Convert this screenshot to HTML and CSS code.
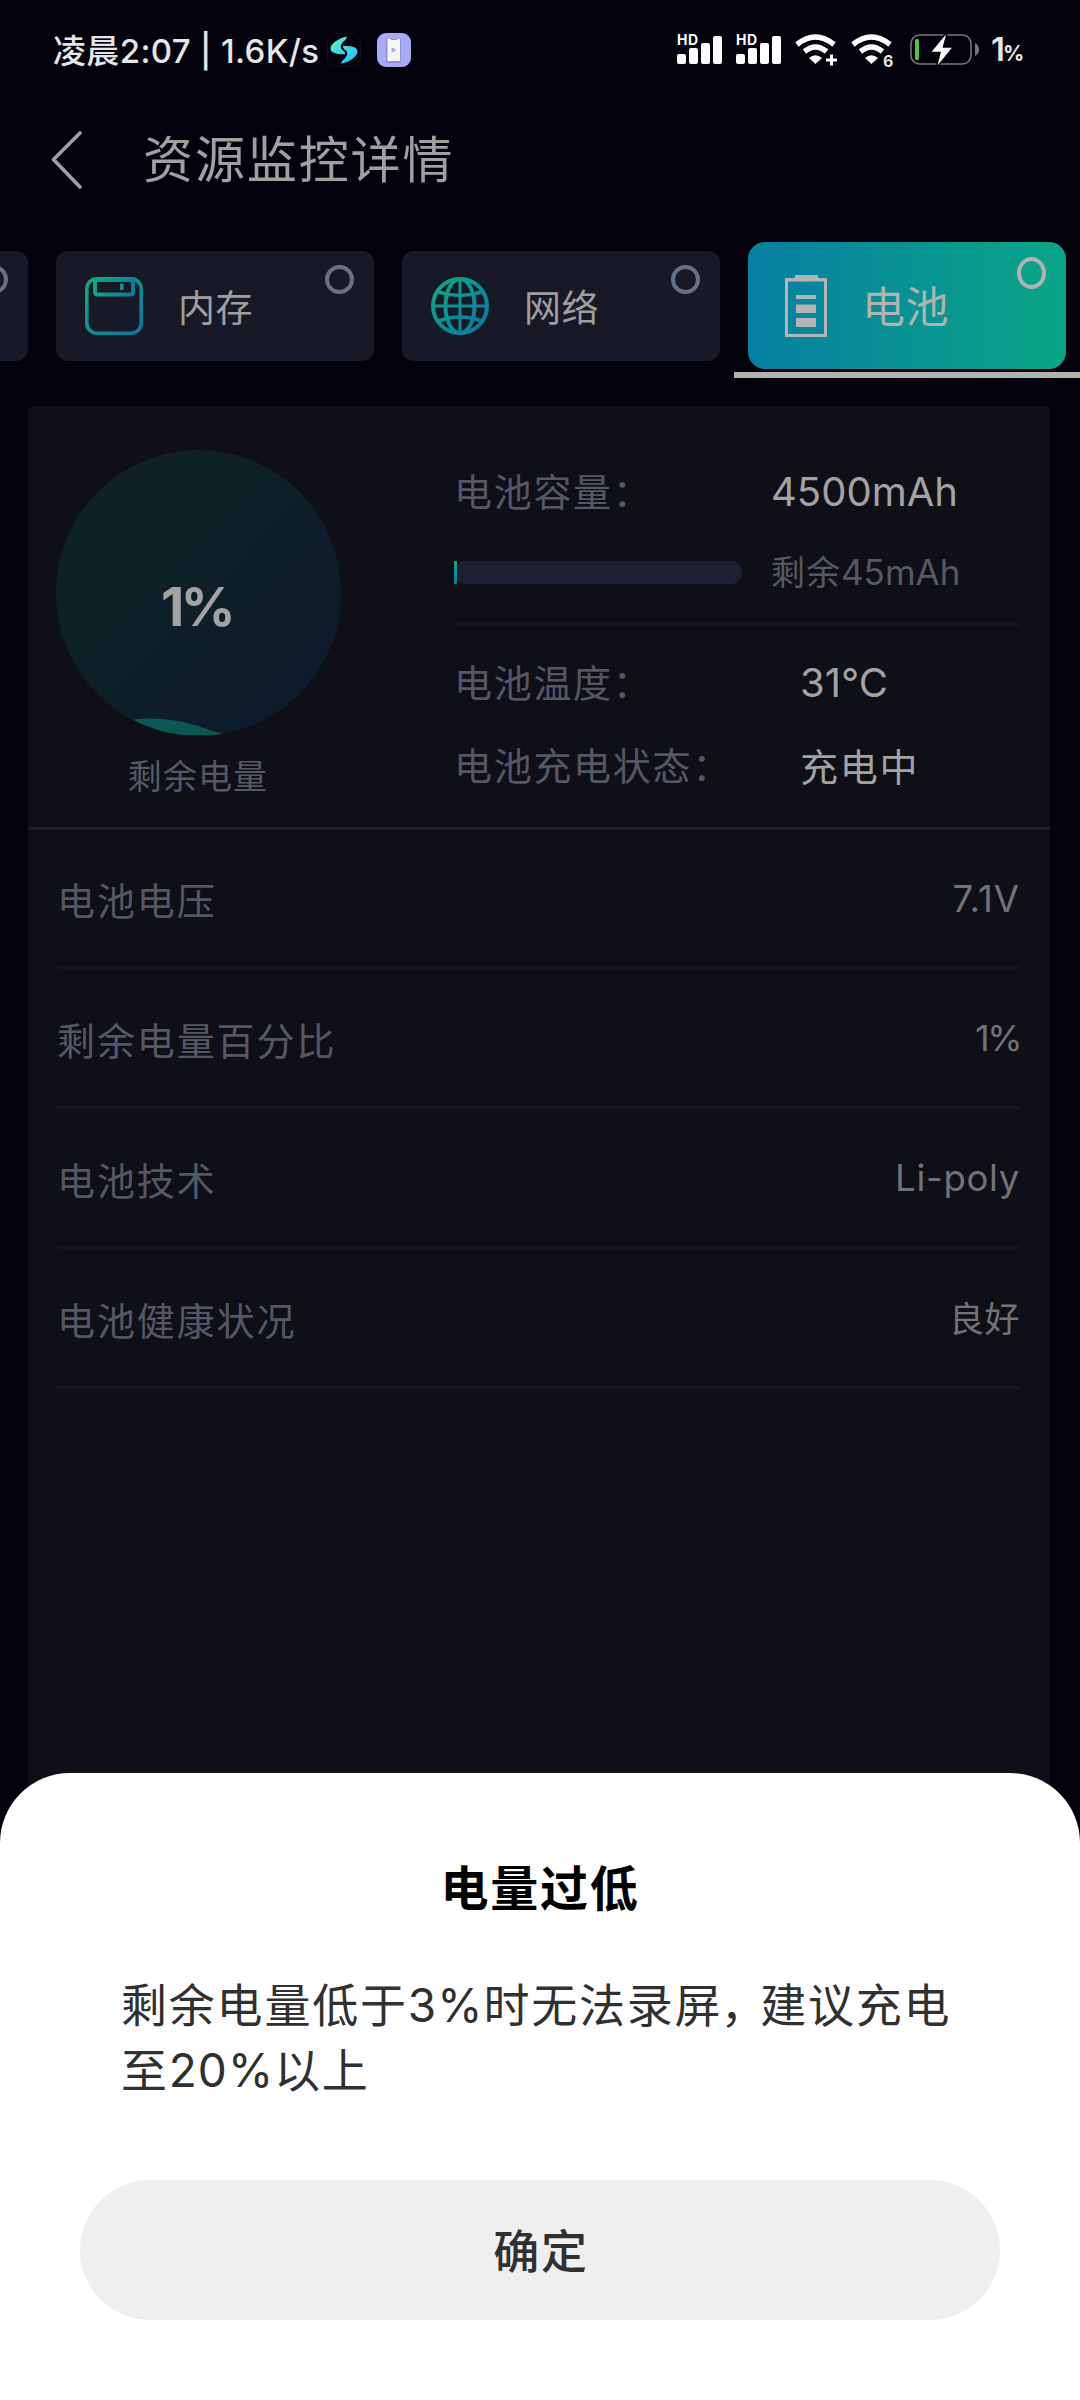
FILE: index.html
```html
<!DOCTYPE html>
<html lang="zh-CN">
<head>
<meta charset="utf-8">
<title>资源监控详情</title>
<link rel="stylesheet" href="styles.css">
</head>
<body>
<svg class="defs" width="0" height="0" aria-hidden="true">
  <defs>
    <linearGradient id="teal" gradientUnits="userSpaceOnUse" x1="0" y1="0" x2="58" y2="58">
      <stop offset="0.1" stop-color="#0fa585"/><stop offset="0.9" stop-color="#0a7ba3"/>
    </linearGradient>
    <linearGradient id="tealSmall" gradientUnits="userSpaceOnUse" x1="8" y1="4" x2="50" y2="20">
      <stop offset="0.1" stop-color="#0fa585"/><stop offset="0.9" stop-color="#0a7ba3"/>
    </linearGradient>
    <linearGradient id="swirl" gradientUnits="userSpaceOnUse" x1="8" y1="4" x2="24" y2="30">
      <stop offset="0" stop-color="#62e8cb"/><stop offset="1" stop-color="#1fc6f2"/>
    </linearGradient>
  </defs>
</svg>
<div class="screen">
  <div class="statusbar">
    <span class="clock">凌晨2:07 | 1.6K/s</span>
    <svg class="app-swirl" width="34" height="34" viewBox="0 0 34 34">
      <rect x="0.5" y="0.5" width="33" height="33" rx="8" fill="none" stroke="#12121e"/>
      <path fill="url(#swirl)" d="M20 3.500C12 5 3.500 10.500 3.500 15.500C3.500 20.500 11 21.500 17.500 21.200C19 20 17 18 15.500 17C13 15 13.500 12 15.500 9.500C17 7.500 19.500 6.500 20 3.500Z"/>
      <path fill="url(#swirl)" d="M14 30.800C22 29.500 30.500 23.500 30.500 18.500C30.500 13.500 23 12.800 16.500 13C15 14 17 16 18.500 17.200C21 19 20.500 22 18.500 24.500C17 26.500 14.500 27.800 14 30.800Z"/>
    </svg>
    <svg class="app-phone" width="34" height="34" viewBox="0 0 34 34">
      <rect width="34" height="34" rx="9" fill="#a8abf3"/>
      <rect x="9" y="6" width="15" height="24" rx="1.5" fill="#8e91de"/>
      <path fill="#f6f5f7" d="M10.500 6h3.500v1h6v-1h3v22h-12.500z"/>
      <path fill="#a8abf3" d="M14.500 14l5 3l-5 3z"/>
    </svg>
    <div class="indicators">
      <div class="signal"><span class="hd">HD</span>
        <svg width="46" height="30" viewBox="0 0 46 30" fill="#fff"><rect x="0" y="19" width="9" height="10" rx="2"/><rect x="12" y="13" width="9" height="16" rx="2"/><rect x="24" y="8" width="9" height="21" rx="2"/><rect x="36" y="1" width="9" height="28" rx="2"/></svg>
      </div>
      <div class="signal"><span class="hd">HD</span>
        <svg width="46" height="30" viewBox="0 0 46 30" fill="#fff"><rect x="0" y="19" width="9" height="10" rx="2"/><rect x="12" y="13" width="9" height="16" rx="2"/><rect x="24" y="8" width="9" height="21" rx="2"/><rect x="36" y="1" width="9" height="28" rx="2"/></svg>
      </div>
      <svg class="wifi" width="43" height="34" viewBox="0 0 43 34" fill="none" stroke="#fff">
        <path stroke-width="5.500" d="M2 10.500Q20.500 -4.500 39 10.500"/>
        <path stroke-width="5.500" d="M9.500 17.500Q20.500 8.500 31.500 17.500"/>
        <path fill="#fff" stroke="none" d="M14 24Q20.500 18.500 27 24L20.500 30z"/>
        <path stroke-width="3" d="M31 26h11M36.500 20.500v11"/>
      </svg>
      <div class="wifi-six"><svg width="43" height="34" viewBox="0 0 43 34" fill="none" stroke="#fff">
        <path stroke-width="5.500" d="M2 10.500Q20.500 -4.500 39 10.500"/>
        <path stroke-width="5.500" d="M9.500 17.500Q20.500 8.500 31.500 17.500"/>
        <path fill="#fff" stroke="none" d="M14 24Q20.500 18.500 27 24L20.500 30z"/>
      </svg><span class="six">6</span></div>
      <svg class="charge" width="69" height="38" viewBox="0 0 69 38">
        <rect x="1" y="4" width="60" height="29" rx="8.500" fill="none" stroke="#77767f" stroke-width="1.600"/>
        <path fill="#77767f" d="M65 12Q69 14 69 18.500Q69 23 65 25z"/>
        <rect x="5" y="8" width="4" height="21" rx="1.500" fill="#4cc644"/>
        <path fill="#fff" stroke="#04020c" stroke-width="1.500" d="M37 1L20 21.500H30L26 37.500L43.500 16H33.500L37.500 1z"/>
      </svg>
      <span class="level">1<small>%</small></span>
    </div>
  </div>

  <header class="header">
    <svg width="32" height="60" viewBox="0 0 32 60" fill="none" stroke="#a0a0a0" stroke-width="3.600" stroke-linecap="round" stroke-linejoin="round"><path d="M29 3L2.500 29.500L29 57"/></svg>
    <h1>资源监控详情</h1>
  </header>

  <nav class="tabs">
    <div class="tab cut"><i class="ring"></i></div>
    <div class="tab">
      <svg width="58" height="58" viewBox="0 0 58 58" fill="none" stroke="url(#teal)" stroke-width="3.600">
        <rect x="1.800" y="1.800" width="54.400" height="54.400" rx="10"/>
        <path stroke="url(#tealSmall)" stroke-width="4" d="M10 3V15Q10 17.500 12.500 17.500H45.500Q48 17.500 48 15V3M9 3H50"/>
        <path stroke-width="3.500" d="M36.800 6.500V13"/>
      </svg>
      <span>内存</span><i class="ring"></i>
    </div>
    <div class="tab">
      <svg width="58" height="58" viewBox="0 0 58 58" fill="none" stroke="url(#teal)" stroke-width="4">
        <circle cx="29" cy="29" r="27"/>
        <ellipse cx="29" cy="29" rx="14.500" ry="27"/>
        <path stroke-width="3" d="M29.010 2L29 56M2 29L56 29.010"/>
        <path stroke-width="3.600" d="M7.500 15Q29 22 50.500 15M7.500 44Q29 36 50.500 44"/>
      </svg>
      <span>网络</span><i class="ring"></i>
    </div>
    <div class="tab active">
      <svg width="58" height="62" viewBox="0 0 58 62" fill="#b3b5b4">
        <path fill-rule="evenodd" d="M8 3H18V0H41V3H50V62H8ZM11 6.500V59H47V6.500Z"/>
        <rect x="19" y="20" width="20" height="4"/><rect x="19" y="29.500" width="20" height="8.500"/><rect x="19" y="43" width="20" height="9"/>
      </svg>
      <span>电池</span><i class="ring"></i>
    </div>
  </nav>

  <main class="panel">
    <section class="summary">
      <div class="gauge">
        <div class="dial">
          <svg class="wave" width="285" height="285" viewBox="0 0 285 285">
            <path fill="#0d5753" d="M60 272Q105 263 145 277Q155 281 168 284V287H60Z"/>
          </svg>
          <b>1%</b>
        </div>
        <span class="caption">剩余电量</span>
      </div>
      <div class="facts">
        <div class="fact cap"><span class="label">电池容量：</span><span class="value mah">4500mAh</span></div>
        <div class="fact left"><div class="bar"><div class="fill" style="width:1%"></div></div><span class="rest">剩余<em>45mAh</em></span></div>
        <div class="fact temp"><span class="label">电池温度：</span><span class="value">31°C</span></div>
        <div class="fact state"><span class="label">电池充电状态：</span><span class="value cjk">充电中</span></div>
      </div>
    </section>
    <ul class="rows">
      <li><span class="label">电池电压</span><span class="num volt">7.1V</span></li>
      <li><span class="label">剩余电量百分比</span><span class="num percent">1%</span></li>
      <li><span class="label">电池技术</span><span class="num poly">Li-poly</span></li>
      <li><span class="label">电池健康状况</span><span class="num cjk">良好</span></li>
    </ul>
  </main>

  <div class="dialog">
    <h2>电量过低</h2>
    <p>剩余电量低于<em>3%</em>时无法录屏<span class="comma">，</span>建议充电<br>至<em>20%</em>以上</p>
    <button type="button">确定</button>
  </div>
</div>
</body>
</html>
```
FILE: styles.css
```css
* { box-sizing: border-box; margin: 0; padding: 0; }
body { background: #04020c; font-family: Inter, "Noto Sans CJK SC", sans-serif; }
em, i { font-style: normal; }
svg { display: block; flex: none; }
.defs { position: absolute; }
.screen { width: 1080px; height: 2400px; display: flex; flex-direction: column; overflow: hidden; position: relative; white-space: nowrap; }

.statusbar { height: 100px; display: flex; align-items: center; padding: 0 58px 0 53px; color: #e6e5e7; }
.clock { font-size: 33px; font-weight: 500; width: 274px; letter-spacing: 0.350px; padding-bottom: 3px; }
.app-phone { margin-left: 16px; }
.indicators { margin-left: auto; display: flex; align-items: center; }
.signal { position: relative; margin-right: 13px; }
.hd { position: absolute; left: 0; top: -2px; font: 700 14px/14px Inter, sans-serif; letter-spacing: 0.5px; color: #fff; }
.wifi { margin: 2px 13px 0 0; }
.wifi-six { position: relative; margin: 2px 16px 0 0; }
.six { position: absolute; left: 32px; top: 19px; font: 700 16px/16px Inter, sans-serif; }
.level { font-size: 33px; font-weight: 600; margin-left: 12px; width: 31px; letter-spacing: -2px; padding-bottom: 2px; }
.level small { font-size: 21px; font-weight: 700; letter-spacing: 0; }

.header { height: 119px; display: flex; align-items: center; padding-left: 51px; gap: 60px; }
.header h1 { font-size: 50px; font-weight: 400; letter-spacing: 1.900px; color: #a0a0a0; padding-bottom: 7px; }

.tabs { height: 187px; padding-top: 23px; display: flex; gap: 28px; align-items: flex-start; }
.tab { position: relative; flex: none; width: 318px; height: 110px; margin-top: 9px; padding: 0 29px; border-radius: 12px; background: #181926; display: flex; align-items: center; gap: 35px; color: #a09f9f; font-size: 37px; letter-spacing: 0.500px; }
.tab span { padding-bottom: 1px; }
.tab.cut { width: 28px; padding: 0; border-radius: 0 12px 12px 0; }
.ring { position: absolute; right: 20px; top: 14px; width: 29px; height: 29px; border: 4px solid #677286; border-radius: 50%; }
.active { height: 127px; margin-top: 0; border-radius: 17px; gap: 27px; background: linear-gradient(90deg, #077fa2, #0aa586); color: #adb4b2; font-size: 43px; }
.active span { padding-bottom: 4px; }
.active .ring { top: 15px; height: 32px; border-color: #b0b4b3; }
.active::after { content: ""; position: absolute; left: -14px; top: 130px; width: 346px; height: 6px; background: #b2b2b2; }

.panel { width: 1022px; margin-left: 28px; flex: 1; background: #0f0f18; border-radius: 6px 6px 0 0; }
.summary { height: 424px; border-bottom: 3px solid #1d1e2d; display: flex; }
.gauge { width: 285px; margin-left: 27.500px; padding-top: 44px; display: flex; flex-direction: column; align-items: center; }
.dial { position: relative; width: 285px; height: 286px; border-radius: 50%; overflow: hidden; background: linear-gradient(135deg, #102224 10%, #0e1f28 55%, #0f1a28 90%); text-align: center; padding-top: 122px; }
.wave { position: absolute; left: 0; top: 0; }
.dial b { font-size: 54px; line-height: 70px; font-weight: 700; color: #a3a3a3; letter-spacing: -3.500px; margin-right: 3px; }
.caption { margin-top: 17px; font-size: 34px; line-height: 48px; letter-spacing: 1.100px; color: #565863; }
.facts { margin-left: 113.500px; width: 567px; display: flex; flex-direction: column; padding-top: 46px; }
.fact { display: flex; align-items: center; }
.label { color: #555864; font-size: 38px; letter-spacing: 1.900px; padding-bottom: 3px; }
.value { color: #a4a2a2; font-size: 40px; padding-bottom: 1px; }
.fact .label { width: 346px; padding-bottom: 5px; letter-spacing: 1.700px; }
.cap { height: 80px; }
.cap .label { width: 317px; }
.left { height: 94px; border-bottom: 3px solid #151622; padding-bottom: 11px; }
.bar { width: 288px; height: 23px; border-radius: 11px; background: #1e2032; margin-right: 29px; }
.fill { height: 23px; background: linear-gradient(#0fa585, #0a7ba3); }
.rest { font-size: 34px; letter-spacing: 1px; color: #565863; padding-bottom: 4px; }
.rest em { font-size: 35px; letter-spacing: 0; }
.temp { height: 114px; }
.state { height: 52px; }
.fact .cjk { font-size: 38px; letter-spacing: 1.800px; padding-bottom: 4px; }

.rows { list-style: none; padding: 0 29px; }
.rows li { height: 140px; border-bottom: 3px solid #151622; display: flex; justify-content: space-between; align-items: center; padding: 4px 2px 0 0; }
.rows li:first-child { height: 139px; }
.num { font-size: 36.500px; color: #737276; margin-top: -3px; }
.volt { letter-spacing: 1px; margin-right: -1px; }
.percent { font-size: 36px; letter-spacing: -2.500px; margin-right: -1px; }
.poly { letter-spacing: 0.700px; margin-right: -1px; }
.num.cjk { font-size: 35px; letter-spacing: 0.500px; padding-bottom: 3px; margin-right: -1px; }

.dialog { position: absolute; left: 0; top: 1773px; width: 1080px; height: 627px; border-radius: 70px 70px 0 0; background: #fff; padding: 80px 80px 0; text-align: center; }
.dialog h2 { font-size: 48px; line-height: 72px; letter-spacing: 1.800px; font-weight: 600; color: #000; }
.dialog p { margin: 48px 0 0 41px; text-align: left; font-size: 46px; line-height: 65px; letter-spacing: 1.800px; color: #303030; }
.dialog em { letter-spacing: 1px; }
.comma { font-feature-settings: "halt" 1; margin: 0 15px 0 -2px; }
.dialog button { display: block; width: 920px; height: 140px; margin-top: 77px; padding: 0 0 4px 2px; border: 0; border-radius: 70px; background: #efefef; font: 500 46px "Noto Sans CJK SC", sans-serif; letter-spacing: 1.800px; color: #303030; }
```
